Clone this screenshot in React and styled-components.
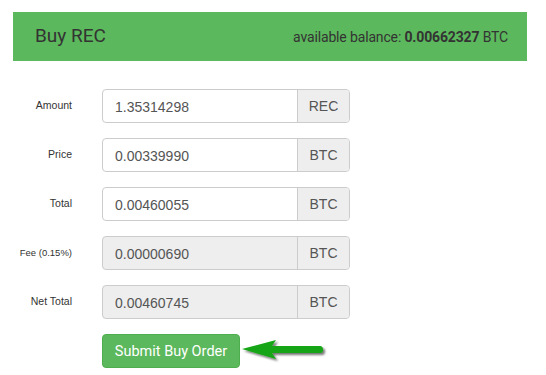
import React from 'react';
import styled, { createGlobalStyle } from 'styled-components';

const GlobalStyle = createGlobalStyle`
	html, body {
		margin: 0;
		padding: 0;
		background: #fff;
	}
	body {
		font-family: "Liberation Sans", Arial, sans-serif;
		color: #333;
	}
`;

const StyledBuyPanel = styled.div`
	width: 546px;
	height: 375px;
	padding: 12px 19px 0 13px;
	box-sizing: border-box;
	overflow: hidden;
`;

const Header = styled.div`
	height: 49px;
	background: #5cb85c;
	display: flex;
	align-items: center;
	justify-content: space-between;
	padding: 0 19px 0 22px;
	font-family: Roboto, "Liberation Sans", sans-serif;
	color: #333;

	h3 {
		margin: 0;
		font-size: 19px;
		font-weight: 400;
		line-height: 1;
		padding-bottom: 2px;
	}

	.balance {
		font-size: 14px;
		letter-spacing: -0.15px;
		b { font-weight: 700; }
	}
`;

const Form = styled.div`
	margin-top: 28px;
	display: grid;
	grid-template-columns: 59px 248px;
	column-gap: 30px;
	row-gap: 15px;
	align-items: center;
`;

const Label = styled.label`
	font-size: ${p => (p.$small ? '9.5px' : '10.5px')};
	color: #333;
	text-align: right;
	padding-bottom: 2px;
`;

const InputGroup = styled.div`
	display: flex;
	height: 34px;
	border: 1px solid #ccc;
	border-radius: 4px;
	box-sizing: border-box;
	overflow: hidden;
	background: ${p => (p.$disabled ? '#eee' : '#fff')};
`;

const Value = styled.div`
	flex-grow: 1;
	display: flex;
	align-items: center;
	padding: 2px 12px 0;
	font-size: 14px;
	color: #555;
`;

const Addon = styled.div`
	width: 51px;
	border-left: 1px solid #ccc;
	background: #eee;
	display: flex;
	align-items: center;
	justify-content: center;
	font-size: 14px;
	color: #555;
`;

const ActionRow = styled.div`
	grid-column: 2;
	display: flex;
	align-items: center;
	gap: 1px;
`;

const SubmitButton = styled.button`
	width: 138px;
	height: 34px;
	background: #5cb85c;
	border: 1px solid #4cae4c;
	border-radius: 4px;
	color: #fff;
	font-family: Roboto, "Liberation Sans", sans-serif;
	font-size: 14.5px;
	padding: 0;
	&:hover { cursor: pointer; }
`;

const rows = [
	{ label: 'Amount', value: '1.35314298', unit: 'REC' },
	{ label: 'Price', value: '0.00339990', unit: 'BTC' },
	{ label: 'Total', value: '0.00460055', unit: 'BTC' },
	{ label: 'Fee (0.15%)', value: '0.00000690', unit: 'BTC', disabled: true, small: true },
	{ label: 'Net Total', value: '0.00460745', unit: 'BTC', disabled: true },
];

const Arrow = () => (
	<svg width="90" height="28" viewBox="0 0 90 28">
		<defs>
			<filter id="arrow-shadow" x="-10%" y="-30%" width="130%" height="180%">
				<feDropShadow dx="2" dy="2" stdDeviation="1.3" floodColor="#000" floodOpacity="0.55" />
			</filter>
		</defs>
		<path
			d="M1 12 L35 3 L31 9 L79 9 Q82 9 82 12.5 Q82 16 79 16 L31 16 L35 22 Z"
			fill="#14a514"
			filter="url(#arrow-shadow)"
		/>
	</svg>
);

export default function App() {
	return (
		<StyledBuyPanel>
			<GlobalStyle />
			<Header>
				<h3>Buy REC</h3>
				<div className="balance">available balance: <b>0.00662327</b> BTC</div>
			</Header>
			<Form>
				{rows.map(r => (
					<React.Fragment key={r.label}>
						<Label $small={r.small}>{r.label}</Label>
						<InputGroup $disabled={r.disabled}>
							<Value>{r.value}</Value>
							<Addon>{r.unit}</Addon>
						</InputGroup>
					</React.Fragment>
				))}
				<ActionRow>
					<SubmitButton>Submit Buy Order</SubmitButton>
					<Arrow />
				</ActionRow>
			</Form>
		</StyledBuyPanel>
	);
}
